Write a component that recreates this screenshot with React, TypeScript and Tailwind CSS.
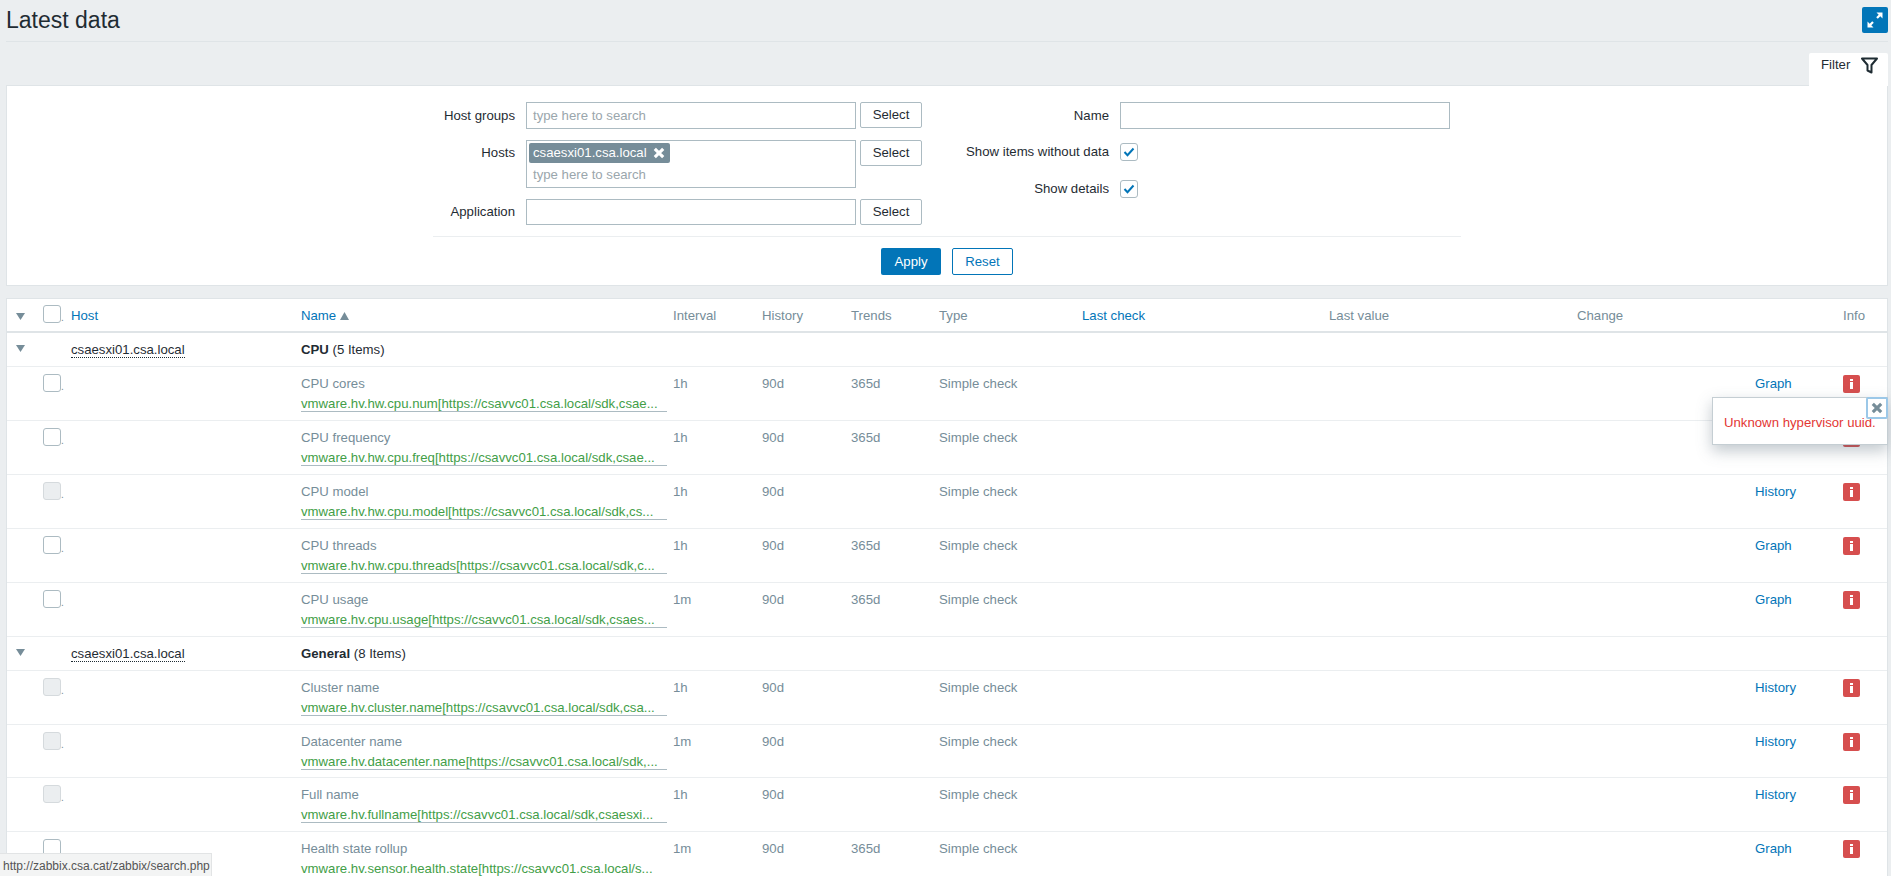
const cols =
  "grid grid-cols-[36px_28px_230px_372px_89px_89px_88px_143px_247px_248px_178px_88px_44px]";

type Item = {
  name: string;
  key: string;
  interval: string;
  trends?: string;
  action: "Graph" | "History";
  disabled?: boolean;
  short?: boolean;
};

const cpuItems: Item[] = [
  { name: "CPU cores", key: "vmware.hv.hw.cpu.num[https://csavvc01.csa.local/sdk,csae...", interval: "1h", trends: "365d", action: "Graph" },
  { name: "CPU frequency", key: "vmware.hv.hw.cpu.freq[https://csavvc01.csa.local/sdk,csae...", interval: "1h", trends: "365d", action: "Graph" },
  { name: "CPU model", key: "vmware.hv.hw.cpu.model[https://csavvc01.csa.local/sdk,cs...", interval: "1h", action: "History", disabled: true },
  { name: "CPU threads", key: "vmware.hv.hw.cpu.threads[https://csavvc01.csa.local/sdk,c...", interval: "1h", trends: "365d", action: "Graph" },
  { name: "CPU usage", key: "vmware.hv.cpu.usage[https://csavvc01.csa.local/sdk,csaes...", interval: "1m", trends: "365d", action: "Graph" },
];

const generalItems: Item[] = [
  { name: "Cluster name", key: "vmware.hv.cluster.name[https://csavvc01.csa.local/sdk,csa...", interval: "1h", action: "History", disabled: true },
  { name: "Datacenter name", key: "vmware.hv.datacenter.name[https://csavvc01.csa.local/sdk,...", interval: "1m", action: "History", disabled: true, short: true },
  { name: "Full name", key: "vmware.hv.fullname[https://csavvc01.csa.local/sdk,csaesxi...", interval: "1h", action: "History", disabled: true },
  { name: "Health state rollup", key: "vmware.hv.sensor.health.state[https://csavvc01.csa.local/s...", interval: "1m", trends: "365d", action: "Graph" },
];

function Arrow() {
  return (
    <svg width="9" height="7" viewBox="0 0 9 7" className="text-[#768d99]">
      <path d="M0 0h9L4.5 7z" fill="currentColor" />
    </svg>
  );
}

function Checkbox({ disabled }: { disabled?: boolean }) {
  return (
    <div
      className={
        disabled
          ? "w-[18px] h-[18px] rounded-[3px] border border-[#d5dadd] bg-[#ebeef0]"
          : "w-[18px] h-[18px] rounded-[3px] border border-[#acbbc2] bg-white"
      }
    />
  );
}

function CheckedBox() {
  return (
    <div className="w-[18px] h-[18px] rounded-[3px] border border-[#acbbc2] bg-white flex items-center justify-center">
      <svg width="12" height="10" viewBox="0 0 12 10">
        <path d="M1.5 5l3 3.2L10.5 1.5" fill="none" stroke="#0275b8" strokeWidth="2" />
      </svg>
    </div>
  );
}

function CloseIcon({ size, color }: { size: number; color: string }) {
  return (
    <svg width={size} height={size} viewBox="0 0 10 10">
      <path d="M1.5 1.5l7 7M8.5 1.5l-7 7" fill="none" stroke={color} strokeWidth="2.6" />
    </svg>
  );
}

function InfoIcon() {
  return (
    <div className="w-[17px] h-[18px] rounded-[2px] bg-[#d64e4e] flex flex-col items-center pt-[4px] gap-[1px]">
      <div className="w-[3px] h-[2px] bg-white" />
      <div className="w-[3px] h-[7px] bg-white" />
    </div>
  );
}

function SelectButton() {
  return (
    <button className="w-[62px] h-[26px] rounded-[2px] border border-[#acbbc2] bg-white text-[#1f2c33]">
      Select
    </button>
  );
}

function HeaderCell({ label, link }: { label: string; link?: boolean }) {
  return <div className={link ? "pt-[2px] text-[#0275b8]" : "pt-[2px] text-[#768d99]"}>{label}</div>;
}

function GroupRow({ title, count }: { title: string; count: string }) {
  return (
    <div className={cols + " h-[34px] border-b border-[#ebeef0] items-center"}>
      <div className="pl-[9px] pb-[2px]">
        <Arrow />
      </div>
      <div />
      <div>
        <span className="border-b border-dotted border-[#1f2c33] text-[#1f2c33]">csaesxi01.csa.local</span>
      </div>
      <div className="col-span-10 text-[#1f2c33]">
        <span className="font-bold">{title}</span> ({count})
      </div>
    </div>
  );
}

function ItemRow({ item }: { item: Item }) {
  return (
    <div className={cols + (item.short ? " h-[53px]" : " h-[54px]") + " border-b border-[#ebeef0] text-[#768d99]"}>
      <div />
      <div className="pt-[7px] flex items-start">
        <Checkbox disabled={item.disabled} />
        <span className="pt-[7px] text-[10px] leading-[11px]">.</span>
      </div>
      <div />
      <div className="pt-[9px]">
        <div className="leading-4">{item.name}</div>
        <div className="mt-[3px] w-[366px] h-[17px] leading-[18px] border-b border-[#acbbc2] text-[#429e47] whitespace-nowrap">
          {item.key}
        </div>
      </div>
      <div className="pt-[9px] leading-4">{item.interval}</div>
      <div className="pt-[9px] leading-4">90d</div>
      <div className="pt-[9px] leading-4">{item.trends}</div>
      <div className="pt-[9px] leading-4">Simple check</div>
      <div />
      <div />
      <div />
      <div className="pt-[9px] leading-4 text-[#0275b8]">{item.action}</div>
      <div className="pt-[8px]">
        <InfoIcon />
      </div>
    </div>
  );
}

export default function App() {
  return (
    <div className="relative h-screen overflow-hidden bg-[#ebeef0] pl-[6px] pr-[3px] text-[13.2px] text-[#1f2c33] [font-family:Liberation_Sans,Arial,sans-serif]">
      <div className="h-[42px] border-b border-[#dfe4e7] flex items-start justify-between pt-[7px]">
        <h1 className="text-[23px] leading-[26px] text-[#1f2c33]">Latest data</h1>
        <button className="w-[26px] h-[26px] rounded-[2px] bg-[#0275b8] flex items-center justify-center">
          <svg width="18" height="18" viewBox="0 0 18 18">
            <path d="M10.5 1.5h6v6l-2.2-2.2-2.5 2.5-1.6-1.6 2.5-2.5zM7.5 16.5h-6v-6l2.2 2.2 2.5-2.5 1.6 1.6-2.5 2.5z" fill="#fff" />
          </svg>
        </button>
      </div>

      <div className="h-[43px] flex justify-end items-end">
        <div className="w-[79px] h-[33px] -mb-px relative bg-white rounded-t-[2px] flex items-center pl-[12px] gap-[11px] pb-[9px] leading-none">
          <span>Filter</span>
          <svg width="17" height="17" viewBox="0 0 17 17">
            <path d="M1 1.5h15l-5.5 6.5v7.5l-4-2V8z" fill="none" stroke="#1f2c33" strokeWidth="2" strokeLinejoin="round" />
          </svg>
        </div>
      </div>

      <section className="bg-white border border-[#dfe4e7] pt-4 pb-[10px]">
        <div className="mx-auto w-[1028px]">
          <div className="flex">
            <div className="flex flex-col gap-[11px]">
              <div className="flex gap-[11px]">
                <label className="w-[82px] h-[27px] text-right leading-[27px]">Host groups</label>
                <div className="w-[330px] h-[27px] border border-[#acbbc2] px-[6px] leading-[25px] text-[#9aa6ac]">type here to search</div>
                <div className="-ml-[7px]"><SelectButton /></div>
              </div>
              <div className="flex gap-[11px]">
                <label className="w-[82px] leading-[26px] text-right">Hosts</label>
                <div className="w-[330px] h-[48px] border border-[#acbbc2] px-[2px] pt-[2px]">
                  <div className="w-[141px] h-[20px] rounded-[2px] bg-[#768d99] text-white flex items-center pl-[4px] gap-[6px]">
                    <span>csaesxi01.csa.local</span>
                    <CloseIcon size={12} color="#fff" />
                  </div>
                  <div className="pl-[4px] pt-[1px] leading-[22px] text-[#9aa6ac]">type here to search</div>
                </div>
                <div className="-ml-[7px]"><SelectButton /></div>
              </div>
              <div className="flex gap-[11px]">
                <label className="w-[82px] h-[26px] text-right leading-[26px]">Application</label>
                <div className="w-[330px] h-[26px] border border-[#acbbc2]" />
                <div className="-ml-[7px]"><SelectButton /></div>
              </div>
            </div>

            <div className="ml-[39px] flex flex-col">
              <div className="flex gap-[11px] items-center h-[27px]">
                <label className="w-[148px] text-right">Name</label>
                <div className="w-[330px] h-[27px] border border-[#acbbc2]" />
              </div>
              <div className="flex gap-[11px] items-center h-[18px] mt-[14px]">
                <label className="w-[148px] text-right">Show items without data</label>
                <CheckedBox />
              </div>
              <div className="flex gap-[11px] items-center h-[18px] mt-[19px]">
                <label className="w-[148px] text-right">Show details</label>
                <CheckedBox />
              </div>
            </div>
          </div>

          <div className="mt-[11px] border-t border-[#ebeef0] pt-[11px] flex justify-center gap-[11px]">
            <button className="w-[60px] h-[27px] rounded-[2px] bg-[#0275b8] text-white">Apply</button>
            <button className="w-[61px] h-[27px] rounded-[2px] border border-[#0275b8] bg-white text-[#0275b8]">Reset</button>
          </div>
        </div>
      </section>

      <section className="mt-[12px] bg-white border border-[#dfe4e7]">
        <div className={cols + " h-[34px] border-b-2 border-[#dfe4e7] items-center"}>
          <div className="pl-[9px] pt-[3px]">
            <Arrow />
          </div>
          <div className="flex items-end pb-[2px]">
            <Checkbox />
            <span className="text-[#768d99] text-[10px] leading-[11px]">.</span>
          </div>
          <HeaderCell label="Host" link />
          <div className="pt-[2px] text-[#0275b8] flex items-center gap-[4px]">
            Name
            <svg width="9" height="8" viewBox="0 0 9 8" className="text-[#768d99]">
              <path d="M4.5 0L9 8H0z" fill="currentColor" />
            </svg>
          </div>
          <HeaderCell label="Interval" />
          <HeaderCell label="History" />
          <HeaderCell label="Trends" />
          <HeaderCell label="Type" />
          <HeaderCell label="Last check" link />
          <HeaderCell label="Last value" />
          <HeaderCell label="Change" />
          <div />
          <HeaderCell label="Info" />
        </div>
        <GroupRow title="CPU" count="5 Items" />
        {cpuItems.map((item) => (
          <ItemRow key={item.name} item={item} />
        ))}
        <GroupRow title="General" count="8 Items" />
        {generalItems.map((item) => (
          <ItemRow key={item.name} item={item} />
        ))}
      </section>

      <div className="absolute top-[397px] right-[3px] w-[176px] h-[48px] bg-white border border-[#c5ced3] shadow-[0_6px_14px_rgba(80,100,115,0.35)]">
        <div className="pl-[11px] pt-[17px] leading-4 text-[#e33734]">Unknown hypervisor uuid.</div>
        <button className="absolute -top-px -right-px w-[22px] h-[22px] rounded-[2px] border-2 border-[#9cc8e8] bg-white flex items-center justify-center">
          <CloseIcon size={12} color="#768d99" />
        </button>
      </div>

      <div className="absolute bottom-0 left-0 w-[212px] h-[23px] bg-[#f3f4f4] border-t border-r border-[#e2e4e5] pl-[3px] text-[12px] leading-[24px] text-[#555]">
        http://zabbix.csa.cat/zabbix/search.php
      </div>
    </div>
  );
}
